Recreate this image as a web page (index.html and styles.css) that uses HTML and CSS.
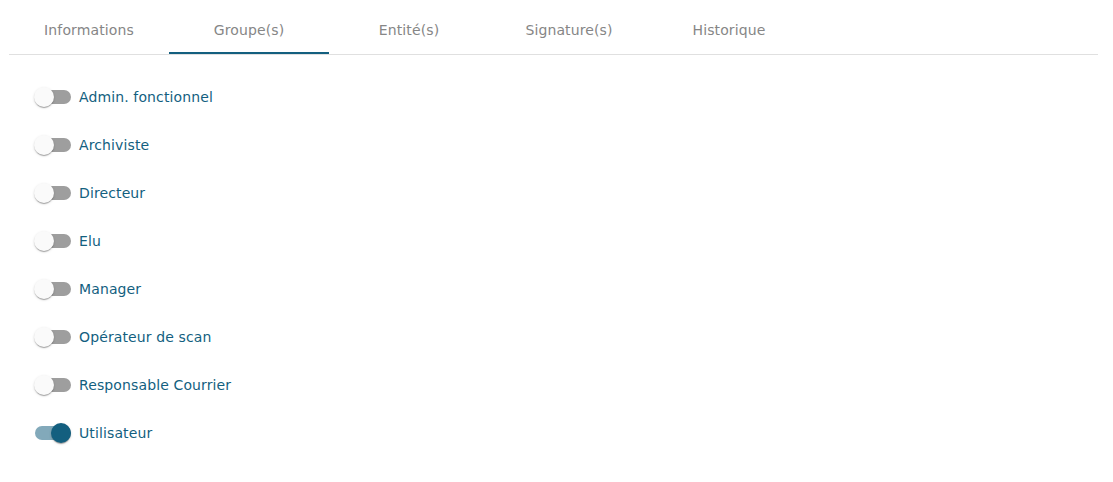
FILE: index.html
```html
<!DOCTYPE html>
<html lang="fr">
<head>
<meta charset="utf-8">
<title>Groupes</title>
<link rel="stylesheet" href="styles.css">
</head>
<body>
<div class="page">
  <nav class="tabs">
    <div class="tab">Informations</div>
    <div class="tab active">Groupe(s)</div>
    <div class="tab">Entité(s)</div>
    <div class="tab">Signature(s)</div>
    <div class="tab">Historique</div>
  </nav>
  <ul class="groups">
    <li class="row"><span class="toggle"><span class="track"></span><span class="thumb"></span></span><span class="label">Admin. fonctionnel</span></li>
    <li class="row"><span class="toggle"><span class="track"></span><span class="thumb"></span></span><span class="label">Archiviste</span></li>
    <li class="row"><span class="toggle"><span class="track"></span><span class="thumb"></span></span><span class="label">Directeur</span></li>
    <li class="row"><span class="toggle"><span class="track"></span><span class="thumb"></span></span><span class="label">Elu</span></li>
    <li class="row"><span class="toggle"><span class="track"></span><span class="thumb"></span></span><span class="label">Manager</span></li>
    <li class="row"><span class="toggle"><span class="track"></span><span class="thumb"></span></span><span class="label">Opérateur de scan</span></li>
    <li class="row"><span class="toggle"><span class="track"></span><span class="thumb"></span></span><span class="label">Responsable Courrier</span></li>
    <li class="row"><span class="toggle on"><span class="track"></span><span class="thumb"></span></span><span class="label">Utilisateur</span></li>
  </ul>
</div>
</body>
</html>
```
FILE: styles.css
```css
html, body {
  margin: 0;
  padding: 0;
  background: #ffffff;
}
body {
  font-family: "DejaVu Sans", sans-serif;
  font-size: 14px;
  letter-spacing: 0.12px;
}
.page {
  padding: 6px 15px 0 9px;
}
.tabs {
  display: flex;
  height: 48px;
  border-bottom: 1px solid #e0e0e0;
}
.tab {
  width: 160px;
  display: flex;
  align-items: center;
  justify-content: center;
  color: #868686;
  box-sizing: border-box;
}
.tab.active {
  border-bottom: 2px solid #135f7f;
  padding-top: 2px;
}
.groups {
  list-style: none;
  margin: 18px 0 0 0;
  padding: 0 0 0 25px;
}
.row {
  height: 48px;
  display: flex;
  align-items: center;
}
.toggle {
  position: relative;
  width: 37px;
  height: 20px;
  margin-right: 8px;
  flex: none;
}
.track {
  position: absolute;
  left: 1px;
  top: 3px;
  width: 36px;
  height: 14px;
  border-radius: 7px;
  background: #9e9e9e;
}
.thumb {
  position: absolute;
  left: 0;
  top: 0;
  width: 20px;
  height: 20px;
  border-radius: 50%;
  background: #fafafa;
  box-shadow: 0 2px 1px -1px rgba(0,0,0,.2), 0 1px 1px 0 rgba(0,0,0,.14), 0 1px 3px 0 rgba(0,0,0,.12);
}
.toggle.on .track {
  background: #82a9ba;
}
.toggle.on .thumb {
  left: 17px;
  background: #135f7f;
}
.label {
  color: #135f7f;
  line-height: 20px;
}
```
